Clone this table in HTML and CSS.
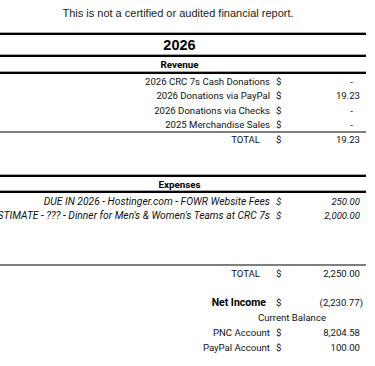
FILE: index.html
```html
<!DOCTYPE html>
<html lang="en">
<head>
<meta charset="utf-8">
<title>2026 Report</title>
<link rel="stylesheet" href="styles.css">
</head>
<body>
<div class="sheet">
  <p class="note">This is not a certified or audited financial report.</p>
  <div class="rule"></div>
  <div class="year">2026</div>
  <div class="rule"></div>
  <div class="head">Revenue</div>
  <div class="rule"></div>
  <div class="rows rev">
    <div class="row"><span class="lbl"><span>2026 CRC 7s Cash Donations</span></span><span class="cur">$</span><span class="val dash">-</span></div>
    <div class="row"><span class="lbl"><span>2026 Donations via PayPal</span></span><span class="cur">$</span><span class="val">19.23</span></div>
    <div class="row"><span class="lbl"><span>2026 Donations via Checks</span></span><span class="cur">$</span><span class="val dash">-</span></div>
    <div class="row"><span class="lbl"><span>2025 Merchandise Sales</span></span><span class="cur">$</span><span class="val dash">-</span></div>
  </div>
  <div class="rule gray"></div>
  <div class="row total"><span class="lbl"><span class="tot">TOTAL</span></span><span class="cur">$</span><span class="val">19.23</span></div>

  <div class="spacer"></div>
  <div class="rule"></div>
  <div class="head exp">Expenses</div>
  <div class="rule"></div>
  <div class="rows exp-rows">
    <div class="row it"><span class="lbl"><span>DUE IN 2026 - Hostinger.com - FOWR Website Fees</span></span><span class="cur">$</span><span class="val">250.00</span></div>
    <div class="row it"><span class="lbl"><span>ESTIMATE - ??? - Dinner for Men's &amp; Women's Teams at CRC 7s</span></span><span class="cur">$</span><span class="val">2,000.00</span></div>
    <div class="row"></div>
    <div class="row"></div>
    <div class="row"></div>
  </div>
  <div class="rule gray"></div>
  <div class="row total tall"><span class="lbl"><span class="tot">TOTAL</span></span><span class="cur">$</span><span class="val">2,250.00</span></div>

  <div class="spacer small"></div>
  <div class="row tall net"><span class="lbl"><span>Net Income</span></span><span class="cur">$</span><span class="val neg">(2,230.77)</span></div>
  <div class="row tall"><span class="balance">Current Balance</span></div>
  <div class="row tall"><span class="lbl"><span>PNC Account</span></span><span class="cur">$</span><span class="val">8,204.58</span></div>
  <div class="row tall"><span class="lbl"><span>PayPal Account</span></span><span class="cur">$</span><span class="val">100.00</span></div>
</div>
</body>
</html>
```

FILE: styles.css
```css
html, body {
  margin: 0;
  padding: 0;
  background: #ffffff;
}
body {
  overflow: hidden;
}
.sheet {
  width: 366px;
  font-family: Roboto, "Liberation Sans", sans-serif;
  font-size: 9.6px;
  color: #111111;
}
.note {
  margin: 0;
  height: 33px;
  box-sizing: border-box;
  padding: 6px 10px 0 0;
  line-height: 14px;
  text-align: center;
  font-family: "Liberation Sans", Arial, sans-serif;
  font-size: 11px;
  color: #222222;
}
.rule {
  height: 2px;
  background: #000000;
  box-shadow: 0 -1px 0 #a6a6a6;
}
.rule.gray {
  background: #7f7f7f;
  box-shadow: none;
}
.year {
  height: 20px;
  line-height: 20px;
  padding-right: 7px;
  text-align: center;
  font-family: "Liberation Sans", Arial, sans-serif;
  font-weight: bold;
  font-size: 14.5px;
  color: #000000;
}
.head {
  height: 15px;
  line-height: 15px;
  padding-right: 7px;
  text-align: center;
  font-weight: bold;
  font-size: 9.8px;
  color: #000000;
}
.head.exp {
  height: 14px;
  line-height: 15px;
}
.rows.rev .row {
  height: 14.25px;
  line-height: 15.5px;
}
.rows.exp-rows .row {
  height: 14.2px;
  line-height: 18px;
}
.row {
  display: grid;
  grid-template-columns: 270px 20px 1fr;
  height: 14px;
  line-height: 14px;
  white-space: nowrap;
}
.row.tall {
  height: 15px;
  line-height: 15px;
}
.lbl {
  display: flex;
  justify-content: flex-end;
  min-width: 0;
}
.tot {
  padding-right: 10px;
}
.cur {
  padding-left: 6px;
}
.val {
  text-align: right;
  padding-right: 6px;
}
.val.dash {
  padding-right: 13px;
}
.val.neg {
  padding-right: 3px;
}
.it {
  font-style: italic;
}
.it .lbl {
  font-size: 10.3px;
}
.net .lbl {
  font-weight: bold;
  font-size: 10.5px;
  padding-right: 4px;
  color: #000000;
}
.balance {
  grid-column: 1 / -1;
  padding-left: 258px;
}
.spacer {
  height: 28px;
}
.spacer.small {
  height: 14px;
}
```
